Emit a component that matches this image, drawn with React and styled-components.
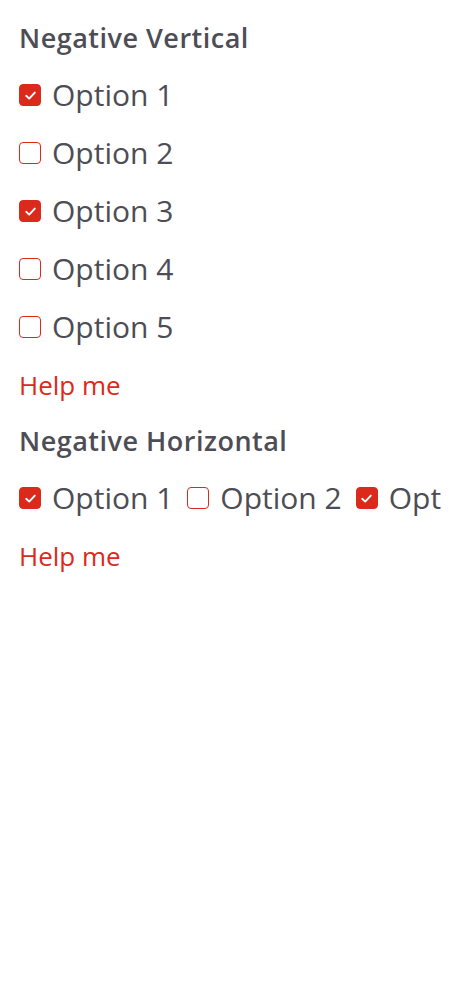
import React from 'react';
import styled, { createGlobalStyle } from 'styled-components';

const Global = createGlobalStyle`
  body {
    margin: 0;
    background: #fff;
    font-family: "Open Sans", "Liberation Sans", sans-serif;
  }
`;

const Page = styled.div`
  padding: 16px 20px 0 19px;
  display: flex;
  flex-direction: column;
`;

const Group = styled.div`
  display: flex;
  flex-direction: column;
  & + & {
    margin-top: 5px;
  }
`;

const Title = styled.h3`
  margin: 0 0 6px;
  height: 44px;
  line-height: 44px;
  font-size: 27px;
  font-weight: 600;
  letter-spacing: 0.5px;
  color: #4d4d55;
`;

const List = styled.div`
  display: flex;
  flex-direction: ${p => (p.horizontal ? 'row' : 'column')};
  gap: ${p => (p.horizontal ? '14px' : '0')};
  overflow: hidden;
  white-space: nowrap;
`;

const Item = styled.label`
  display: flex;
  align-items: center;
  height: 58px;
  flex-shrink: 0;
`;

const Box = styled.span`
  width: 22px;
  height: 22px;
  box-sizing: border-box;
  border-radius: 4px;
  border: 1.5px solid #db2a1b;
  background: ${p => (p.checked ? '#db2a1b' : '#fff')};
  display: flex;
  align-items: center;
  justify-content: center;
  margin-right: 11px;
`;

const Label = styled.span`
  font-size: 30px;
  color: #4d4d55;
  line-height: 1;
`;

const Help = styled.div`
  height: 58px;
  line-height: 58px;
  font-size: 26px;
  color: #db2a1b;
`;

const Check = () => (
  <svg width="13" height="11" viewBox="0 0 13 11">
    <path d="M2.2 5.8 L5.2 8.6 L10.8 2.6" fill="none" stroke="#fff" strokeWidth="1.9" strokeLinecap="round" strokeLinejoin="round" />
  </svg>
);

const Option = ({ checked, children }) => (
  <Item>
    <Box checked={checked}>{checked && <Check />}</Box>
    <Label>{children}</Label>
  </Item>
);

const options = [
  { name: 'Option 1', checked: true },
  { name: 'Option 2', checked: false },
  { name: 'Option 3', checked: true },
  { name: 'Option 4', checked: false },
  { name: 'Option 5', checked: false },
];

export default function App() {
  return (
    <>
      <Global />
      <Page>
        <Group>
          <Title>Negative Vertical</Title>
          <List>
            {options.map(o => (
              <Option key={o.name} checked={o.checked}>{o.name}</Option>
            ))}
          </List>
          <Help>Help me</Help>
        </Group>
        <Group>
          <Title>Negative Horizontal</Title>
          <List horizontal>
            {options.slice(0, 3).map(o => (
              <Option key={o.name} checked={o.checked}>{o.name}</Option>
            ))}
          </List>
          <Help>Help me</Help>
        </Group>
      </Page>
    </>
  );
}
